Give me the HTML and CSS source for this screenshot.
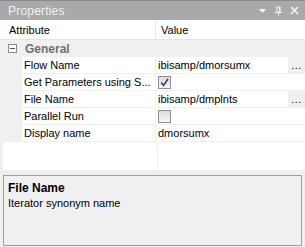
FILE: index.html
```html
<!DOCTYPE html>
<html>
<head>
<meta charset="utf-8">
<link rel="stylesheet" href="styles.css">
</head>
<body>
<div class="panel">
  <div class="title">
    <span class="title-text">Properties</span>
    <div class="title-icons">
      <svg width="9" height="9" viewBox="0 0 9 9"><path d="M1 3 L8 3 L4.5 7 Z" fill="#f4f4f4"/></svg>
      <svg width="9" height="10" viewBox="0 0 9 10"><path d="M2.5 1 H6.5 M3 1 V6 M6 1 V6 M5.5 1 V6 M1 6.5 H8 M4.5 6.5 V9.5" stroke="#f4f4f4" stroke-width="1" fill="none"/></svg>
      <svg width="9" height="9" viewBox="0 0 9 9"><path d="M1 1 L8 8 M8 1 L1 8" stroke="#f4f4f4" stroke-width="1.6"/></svg>
    </div>
  </div>
  <div class="header">
    <div class="hcell">Attribute</div>
    <div class="hcell hval">Value</div>
  </div>
  <div class="cat">
    <span class="minus"></span>
    <span class="cat-name">General</span>
  </div>
  <div class="row">
    <div class="gut"></div>
    <div class="name">Flow Name</div>
    <div class="val"><span class="text">ibisamp/dmorsumx</span><span class="dots">...</span></div>
  </div>
  <div class="row">
    <div class="gut"></div>
    <div class="name">Get Parameters using S...</div>
    <div class="val cb-cell"><span class="cb checked"><svg width="9" height="9" viewBox="0 0 9 9"><path d="M1.2 4.6 L3.5 7.4 L8 1" stroke="#27407a" stroke-width="1.6" fill="none"/></svg></span></div>
  </div>
  <div class="row">
    <div class="gut"></div>
    <div class="name">File Name</div>
    <div class="val"><span class="text">ibisamp/dmplnts</span><span class="dots">...</span></div>
  </div>
  <div class="row">
    <div class="gut"></div>
    <div class="name">Parallel Run</div>
    <div class="val cb-cell"><span class="cb"></span></div>
  </div>
  <div class="row">
    <div class="gut"></div>
    <div class="name">Display name</div>
    <div class="val"><span class="text">dmorsumx</span></div>
  </div>
  <div class="empty">
    <div class="ecol"></div>
    <div class="ecol2"></div>
  </div>
  <div class="desc">
    <div class="desc-title">File Name</div>
    <div class="desc-text">Iterator synonym name</div>
  </div>
</div>
</body>
</html>
```

FILE: styles.css
```css
html, body {
  margin: 0;
  padding: 0;
}
body {
  font-family: "Liberation Sans", Arial, sans-serif;
  font-size: 11px;
  color: #000;
  background: #f0f0f0;
}
.panel {
  width: 305px;
  height: 247px;
  display: flex;
  flex-direction: column;
  background: #f0f0f0;
  overflow: hidden;
}
.title {
  height: 19px;
  flex: none;
  background: #a9a9a9;
  border-top: 1px solid #8a8a8a;
  display: flex;
  align-items: center;
  justify-content: space-between;
  padding: 0 6px 0 8px;
}
.title-text {
  color: #f0f0f0;
  font-size: 12px;
  letter-spacing: 0.2px;
}
.title-icons {
  display: flex;
  align-items: center;
  gap: 7px;
}
.title-icons svg {
  display: block;
}
.header {
  height: 20px;
  flex: none;
  background: #fff;
  border-bottom: 1px solid #e4e4e4;
  display: grid;
  grid-template-columns: 155px 1fr;
  box-sizing: border-box;
}
.hcell {
  display: flex;
  align-items: center;
  padding-left: 9px;
}
.hval {
  border-left: 1px solid #e8e8e8;
  padding-left: 5px;
}
.cat {
  height: 17px;
  flex: none;
  display: flex;
  align-items: center;
  background: #f0f0f0;
}
.minus {
  width: 7px;
  height: 7px;
  border: 1px solid #8c8c8c;
  background: #fff;
  margin-left: 8px;
  position: relative;
}
.minus::after {
  content: "";
  position: absolute;
  left: 1px;
  top: 3px;
  width: 5px;
  height: 1px;
  background: #555;
}
.cat-name {
  margin-left: 8px;
  font-weight: bold;
  color: #707070;
  font-size: 12px;
}
.row {
  height: 17px;
  flex: none;
  display: grid;
  grid-template-columns: 21px 133px 1fr;
  column-gap: 1px;
  box-sizing: border-box;
  border-bottom: 1px solid #f0f0f0;
}
.gut {
  background: #f0f0f0;
}
.name {
  background: #fff;
  padding-left: 2px;
  display: flex;
  align-items: center;
  white-space: nowrap;
  overflow: hidden;
}
.val {
  display: flex;
  align-items: center;
  background: #fff;
}
.val .text {
  flex: 1;
  height: 100%;
  display: flex;
  align-items: center;
  padding-left: 2px;
  background: #fff;
}
.dots {
  width: 17px;
  height: 100%;
  background: #f0f0f0;
  display: flex;
  align-items: center;
  justify-content: center;
  letter-spacing: 0.5px;
}
.cb-cell {
  padding-left: 2px;
}
.cb {
  width: 11px;
  height: 11px;
  border: 1px solid #8f8f8f;
  background: linear-gradient(#dcdcdc, #f6f6f6);
  display: flex;
  align-items: center;
  justify-content: center;
}
.cb svg {
  display: block;
}
.empty {
  height: 28px;
  flex: none;
  display: grid;
  grid-template-columns: 154px 1fr;
  column-gap: 1px;
  margin-left: 3px;
  background: #f0f0f0;
  margin-bottom: 5px;
}
.ecol, .ecol2 {
  background: #fff;
}
.desc {
  flex: 1;
  margin: 0 3px 1px 3px;
  border: 1px solid #a0a0a0;
  background: #f0f0f0;
  padding: 5px 4px 4px;
}
.desc-title {
  font-weight: bold;
  font-size: 12px;
  line-height: 15px;
}
.desc-text {
  line-height: 15px;
}
```
